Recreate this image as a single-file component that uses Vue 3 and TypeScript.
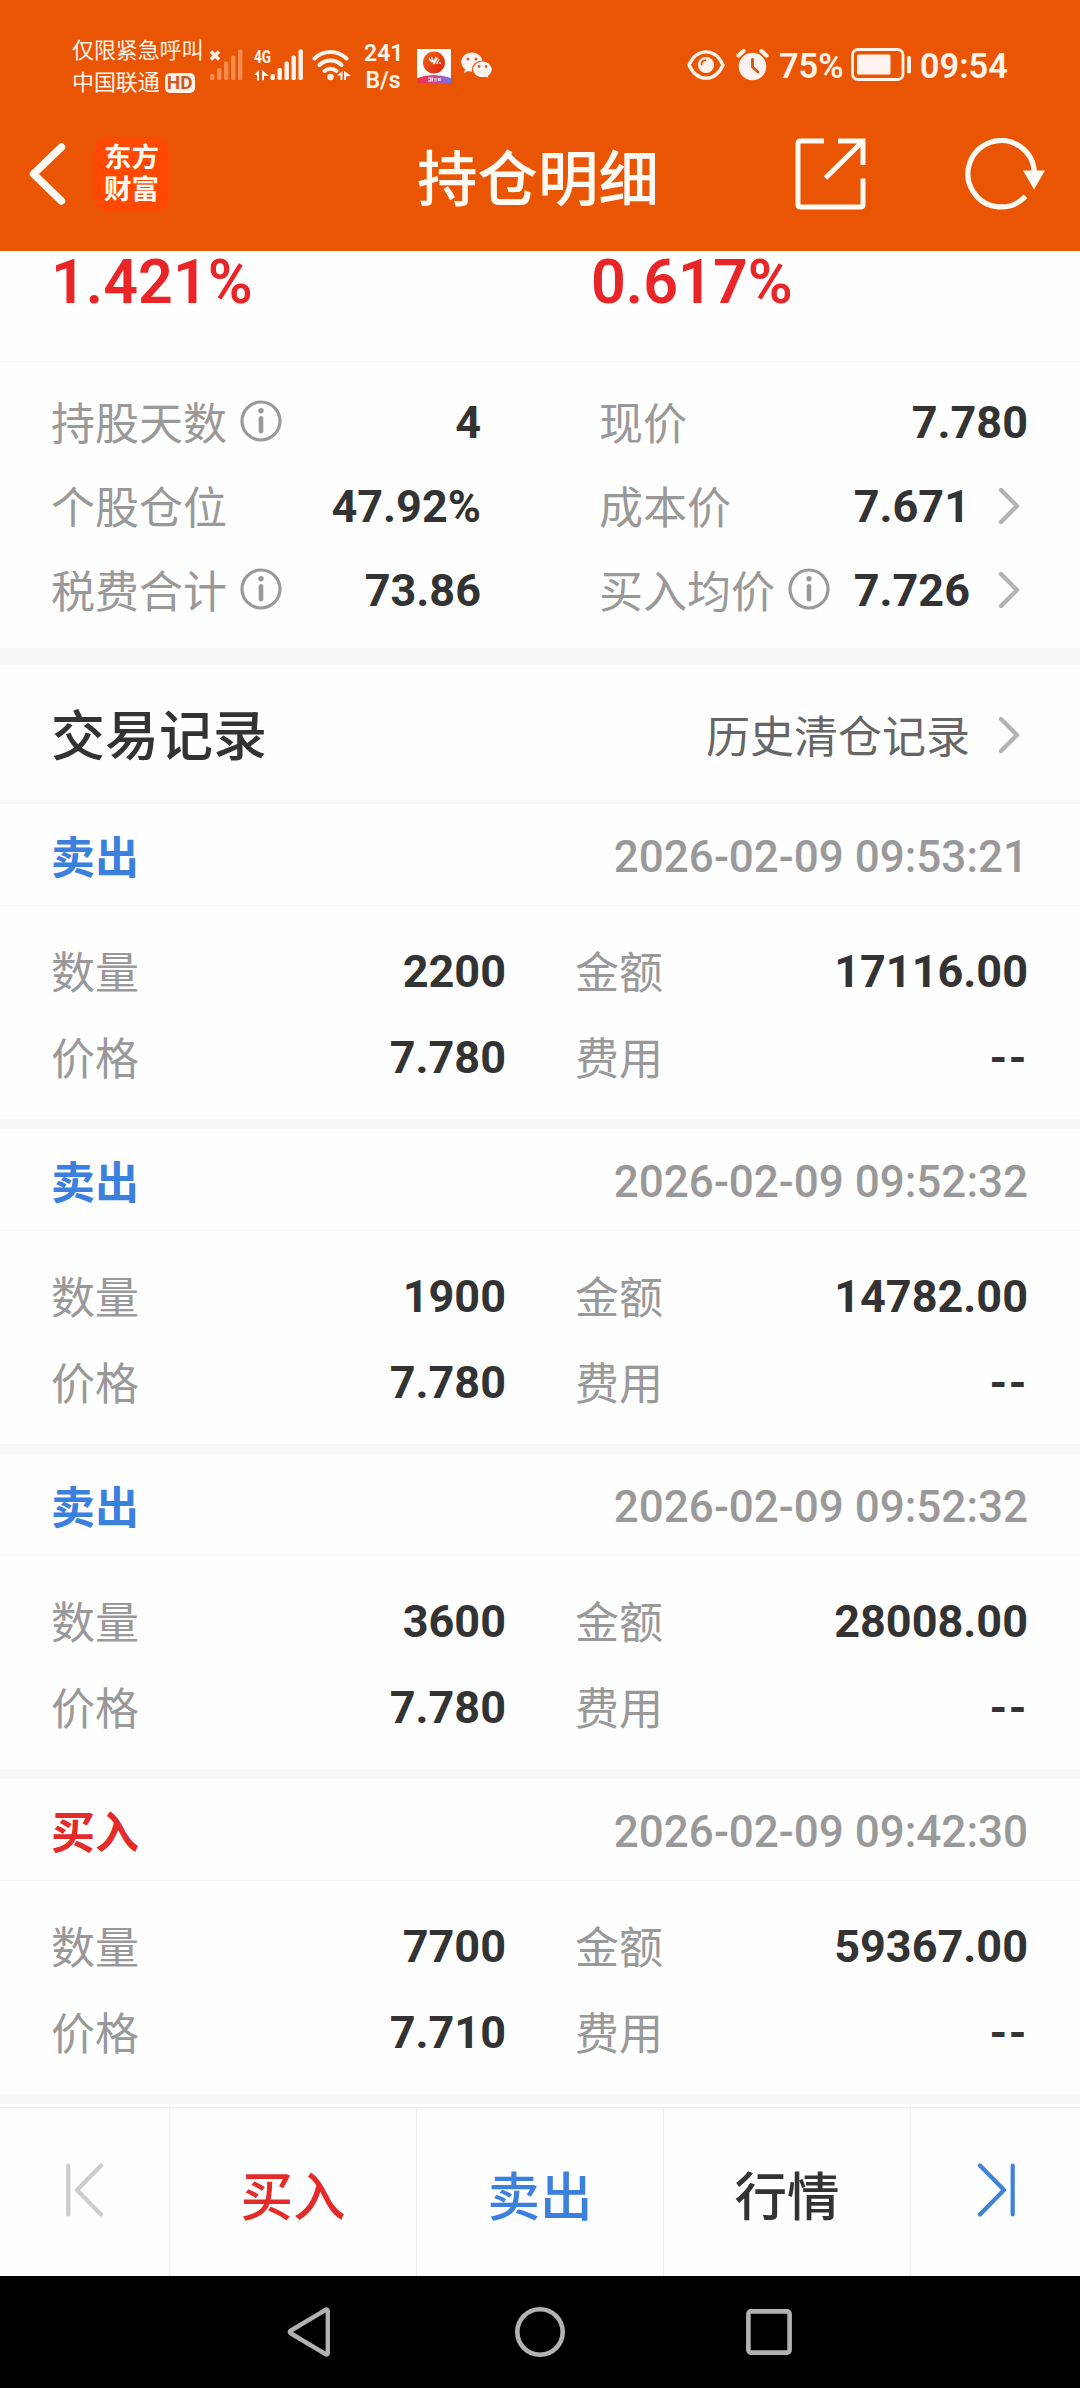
<script setup lang="ts">
interface TradeRecord {
  side: 'buy' | 'sell'
  time: string
  quantity: string
  amount: string
  price: string
  fee: string
}

interface Stat {
  label: string
  value: string
  info?: boolean
  link?: boolean
}

const stats: [Stat, Stat][] = [
  [
    { label: '持股天数', value: '4', info: true },
    { label: '现价', value: '7.780' },
  ],
  [
    { label: '个股仓位', value: '47.92%' },
    { label: '成本价', value: '7.671', link: true },
  ],
  [
    { label: '税费合计', value: '73.86', info: true },
    { label: '买入均价', value: '7.726', info: true, link: true },
  ],
]

const records: TradeRecord[] = [
  { side: 'sell', time: '2026-02-09 09:53:21', quantity: '2200', amount: '17116.00', price: '7.780', fee: '--' },
  { side: 'sell', time: '2026-02-09 09:52:32', quantity: '1900', amount: '14782.00', price: '7.780', fee: '--' },
  { side: 'sell', time: '2026-02-09 09:52:32', quantity: '3600', amount: '28008.00', price: '7.780', fee: '--' },
  { side: 'buy', time: '2026-02-09 09:42:30', quantity: '7700', amount: '59367.00', price: '7.710', fee: '--' },
]
</script>

<template>
  <div class="screen">
    <header class="top">
      <div class="status">
        <div class="carrier">
          <div class="carrier-line">仅限紧急呼叫</div>
          <div class="carrier-line">中国联通<span class="hd">HD</span></div>
        </div>
        <svg class="signal-off" width="34" height="32" viewBox="0 0 34 32">
          <path d="M2 2.500l8 8M10 2.500l-8 8" stroke="#fff3ea" stroke-width="3.400" />
          <g fill="#f78c4d">
            <rect x="1" y="25" width="4.400" height="6" rx="1.600" />
            <rect x="8" y="19" width="4.400" height="12" rx="1.600" />
            <rect x="15" y="12.500" width="4.400" height="18.500" rx="1.600" />
            <rect x="22" y="6.500" width="4.400" height="24.500" rx="1.600" />
            <rect x="29" y="0.500" width="4.400" height="30.500" rx="1.600" />
          </g>
        </svg>
        <div class="mobile">
          <div class="gen">
            <span class="gen-text">4G</span>
            <svg width="16" height="11" viewBox="0 0 16 11" fill="#fff3ea">
              <path d="M0 5L5 0v10.500H3V5zM8 0v10.500L10 10V6h5z" />
            </svg>
          </div>
          <svg width="34" height="32" viewBox="0 0 34 32" fill="#fff3ea">
            <rect x="0.500" y="25" width="4.400" height="6" rx="1.600" />
            <rect x="7.500" y="19" width="4.400" height="12" rx="1.600" />
            <rect x="14.500" y="12.500" width="4.400" height="18.500" rx="1.600" />
            <rect x="21.500" y="6.500" width="4.400" height="24.500" rx="1.600" />
            <rect x="28.500" y="0.500" width="4.400" height="30.500" rx="1.600" />
          </svg>
        </div>
        <svg class="wifi" width="40" height="32" viewBox="0 0 40 32">
          <g fill="none" stroke="#fff3ea" stroke-width="4" stroke-linecap="round">
            <path d="M2.500 9.500a23 23 0 0 1 32 0" />
            <path d="M7.500 16a16 16 0 0 1 22 0" />
            <path d="M12.500 22a9 9 0 0 1 12 0" />
          </g>
          <circle cx="18.500" cy="28" r="3.300" fill="#fff3ea" />
          <path d="M25 26.500L30.500 22v9h-2v-4.500zM32 22v9h2v-3.500l5-1z" fill="#fff3ea" />
        </svg>
        <div class="speed">
          <div>241</div>
          <div>B/s</div>
        </div>
        <svg class="app-badge" width="34" height="34" viewBox="0 0 34 34">
          <defs>
            <linearGradient id="ball" x1="0" y1="0" x2="1" y2="1">
              <stop offset="0" stop-color="#f06a10" />
              <stop offset="1" stop-color="#dc1f13" />
            </linearGradient>
            <linearGradient id="ribbon" x1="0" y1="0" x2="1" y2="0">
              <stop offset="0" stop-color="#f0353f" />
              <stop offset="0.500" stop-color="#d8408c" />
              <stop offset="1" stop-color="#6f78f2" />
            </linearGradient>
          </defs>
          <rect width="34" height="34" fill="#fff" />
          <circle cx="17" cy="13.500" r="11" fill="url(#ball)" />
          <path d="M12 9.500l3 3.500M14.500 8l2 6 2.500-6M17 15l3.500-6.500M19.500 15l2.500-5M22.500 13l1 2" fill="none" stroke="#fff" stroke-width="1.300" />
          <path d="M0 29q17-6 34 0v5H0z" fill="url(#ribbon)" />
          <path d="M11 29h3v3h-3M15.500 28.500v4M17 30h3M17.500 32h2M21.500 29v3M23 29v3" fill="none" stroke="#fff" stroke-width="1.100" />
        </svg>
        <svg class="wechat" width="32" height="28" viewBox="0 0 32 28">
          <path d="M11 0.500C5 0.500 0.300 4.700 0.300 10c0 3 1.500 5.500 3.700 7.200L3.200 21l4-2c2.500.7 4.500.8 7 .3C22 18 21.700 12 21.500 9.500 21 4.200 16.500 0.500 11 0.500z" fill="#fff3ef" />
          <path d="M21.500 9c-5.500 0-10 3.800-10 8.500s4.500 8.300 10 8.300c1.300 0 2.500-.2 3.600-.5l3.200 1.700-.7-3c2.300-1.600 3.700-3.900 3.700-6.500 0-4.700-4.400-8.500-9.800-8.500z" fill="#fff3ef" stroke="#ea5504" stroke-width="1.200" />
          <g fill="#c06a3c">
            <circle cx="7" cy="7" r="1.500" />
            <circle cx="15" cy="7" r="1.500" />
            <circle cx="18" cy="14.500" r="1.400" />
            <circle cx="25" cy="14.500" r="1.400" />
          </g>
        </svg>
        <div class="status-right">
          <svg width="38" height="30" viewBox="0 0 38 30">
            <path d="M2 15C10-2.500 28-2.500 36 15 28 32.500 10 32.500 2 15z" fill="none" stroke="#fff3ea" stroke-width="3.400" stroke-linejoin="round" />
            <circle cx="19" cy="15" r="8" fill="#fff3ea" />
            <path d="M14.500 14.500a4.500 4.500 0 0 1 4-4.300" fill="none" stroke="#ea5504" stroke-width="1.800" stroke-linecap="round" />
          </svg>
          <svg class="alarm" width="33" height="32" viewBox="0 0 33 32">
            <circle cx="16.500" cy="17.500" r="13.800" fill="#fff3ef" />
            <path d="M2.500 6.500l5-4.500M30.500 6.500l-5-4.500" stroke="#fff3ea" stroke-width="4.200" stroke-linecap="round" />
            <path d="M16.500 10.500v7.500l5.500 5" fill="none" stroke="#c9561c" stroke-width="2.800" stroke-linecap="round" stroke-linejoin="round" />
          </svg>
          <span class="status-num percent">75%</span>
          <svg class="battery" width="61" height="34" viewBox="0 0 61 34">
            <rect x="1.500" y="1.500" width="50.500" height="30" rx="5.500" fill="none" stroke="#fff3ea" stroke-width="2.800" />
            <rect x="6" y="6.500" width="33.500" height="20" rx="1.500" fill="#fff3ef" />
            <rect x="56" y="8" width="4" height="17.500" rx="1.800" fill="#fff3ea" />
          </svg>
          <span class="status-num">09:54</span>
        </div>
      </div>
      <div class="titlebar">
        <div class="title-side">
          <svg width="38" height="62" viewBox="0 0 38 62">
            <path d="M32.500 4L4.500 31l28 27" fill="none" stroke="#fffaf5" stroke-width="7.500" stroke-linecap="round" stroke-linejoin="round" />
          </svg>
          <div class="logo"><span>东方</span><span>财富</span></div>
        </div>
        <h1 class="title">持仓明细</h1>
        <div class="title-side right">
          <svg width="72" height="72" viewBox="0 0 72 72" fill="none" stroke="#fffaf3" stroke-width="5">
            <path d="M29 3H5.500Q3 3 3 5.500v61q0 2.500 2.500 2.500h60q2.500 0 2.500-2.500V40.500" />
            <path d="M43 3h25v24M67.500 3.500L30.500 40" />
          </svg>
          <svg class="refresh" width="82" height="72" viewBox="0 0 82 72">
            <path d="M69.300 34A33.200 33.200 0 1 0 60.500 58.300" fill="none" stroke="#fffaf3" stroke-width="5.200" />
            <path d="M58 32.500h22L69 51.500z" fill="#fffaf3" />
          </svg>
        </div>
      </div>
    </header>

    <section class="rates">
      <span class="rate">1.421%</span>
      <span class="rate">0.617%</span>
    </section>

    <section class="stats">
      <div v-for="(row, i) in stats" :key="i" class="stat-row">
        <div v-for="(cell, j) in row" :key="j" class="stat">
          <span class="label">{{ cell.label }}</span>
          <svg v-if="cell.info" class="info" width="42" height="42" viewBox="0 0 42 42">
            <circle cx="21" cy="21" r="19" fill="none" stroke="#999" stroke-width="3.200" />
            <circle cx="21" cy="10.800" r="2.700" fill="#999" />
            <path d="M21 18.300v13" stroke="#999" stroke-width="4.600" stroke-linecap="round" />
          </svg>
          <span class="value">{{ cell.value }}</span>
          <svg v-if="cell.link" class="chevron" width="22" height="38" viewBox="0 0 22 38">
            <path d="M3 3l16 16L3 35" fill="none" stroke="#b3b3b3" stroke-width="4.400" stroke-linecap="round" stroke-linejoin="round" />
          </svg>
        </div>
      </div>
    </section>

    <section class="section-head">
      <h2 class="section-title">交易记录</h2>
      <span class="history">历史清仓记录</span>
      <svg class="chevron" width="22" height="38" viewBox="0 0 22 38">
        <path d="M3 3l16 16L3 35" fill="none" stroke="#b3b3b3" stroke-width="4.400" stroke-linecap="round" stroke-linejoin="round" />
      </svg>
    </section>

    <article v-for="(r, i) in records" :key="i" class="record">
      <div class="record-head">
        <span class="side" :class="r.side">{{ r.side === 'buy' ? '买入' : '卖出' }}</span>
        <time class="time">{{ r.time }}</time>
      </div>
      <div class="record-body">
        <div class="record-row">
          <div class="pair"><span class="label">数量</span><span class="value">{{ r.quantity }}</span></div>
          <div class="pair"><span class="label">金额</span><span class="value">{{ r.amount }}</span></div>
        </div>
        <div class="record-row">
          <div class="pair"><span class="label">价格</span><span class="value">{{ r.price }}</span></div>
          <div class="pair"><span class="label">费用</span><span class="value fee">{{ r.fee }}</span></div>
        </div>
      </div>
    </article>

    <nav class="actions">
      <div class="action edge">
        <svg width="38" height="54" viewBox="0 0 38 54" fill="none" stroke="#ccc" stroke-width="4.200" stroke-linecap="round" stroke-linejoin="round">
          <path d="M2.300 2.500v49M35 2.500L11 27l24 24.500" />
        </svg>
      </div>
      <div class="action buy"><span>买入</span></div>
      <div class="action sell"><span>卖出</span></div>
      <div class="action"><span>行情</span></div>
      <div class="action edge">
        <svg width="38" height="54" viewBox="0 0 38 54" fill="none" stroke="#3f82d8" stroke-width="4.200" stroke-linecap="round" stroke-linejoin="round">
          <path d="M35.700 2.500v49M3 2.500L27 27 3 51.500" />
        </svg>
      </div>
    </nav>

    <footer class="sysnav">
      <svg width="44" height="50" viewBox="0 0 44 50">
        <path d="M40.800 4.500v41q0 3-2.600 1.400L4 26.500q-2.500-1.500 0-3L38.200 3.100q2.600-1.600 2.600 1.400z" fill="none" stroke="#b2b2b2" stroke-width="4.400" stroke-linejoin="round" />
      </svg>
      <svg class="home" width="50" height="50" viewBox="0 0 50 50">
        <circle cx="25" cy="25" r="22.700" fill="none" stroke="#b2b2b2" stroke-width="4.600" />
      </svg>
      <svg width="46" height="46" viewBox="0 0 46 46">
        <rect x="2.400" y="2.400" width="41.200" height="41.200" rx="2.500" fill="none" stroke="#b2b2b2" stroke-width="4.600" />
      </svg>
    </footer>
  </div>
</template>

<style>
body {
  margin: 0;
  background: #fefefe;
}
</style>

<style scoped>
.screen {
  width: 1080px;
  height: 2388px;
  display: flex;
  flex-direction: column;
  overflow: hidden;
  background: #fefefe;
  color: #333;
  font-family: Roboto, "Noto Sans CJK SC", sans-serif;
}
svg {
  display: block;
  flex: none;
}
.top {
  height: 251px;
  flex: none;
  background: #ea5504;
  color: #fffaf3;
}
.status {
  height: 110px;
  padding: 20px 72px 0 72px;
  box-sizing: border-box;
  display: flex;
  align-items: center;
  color: #fff3ea;
}
.carrier {
  width: 137px;
  font-size: 22px;
  line-height: 32px;
  white-space: nowrap;
  padding-top: 4px;
}
.carrier-line {
  display: flex;
  align-items: center;
  letter-spacing: -0.1px;
}
.hd {
  width: 30px;
  height: 20px;
  margin: 0 0 0 5px;
  border-radius: 5px;
  background: #fff3ea;
  color: #d4571a;
  font-size: 19px;
  font-weight: 700;
  line-height: 20px;
  text-align: center;
}
.signal-off {
  margin-right: 11px;
}
.mobile {
  display: flex;
  align-items: flex-end;
}
.gen {
  width: 16px;
  height: 32px;
  display: flex;
  flex-direction: column;
  justify-content: space-between;
}
.gen-text {
  font-size: 19px;
  font-weight: 700;
  line-height: 16px;
  white-space: nowrap;
  transform: scaleX(0.72);
  transform-origin: left;
}
.wifi {
  margin-left: 8px;
}
.speed {
  width: 38px;
  margin-left: 12px;
  padding-top: 4px;
  text-align: center;
  font-size: 23px;
  line-height: 27px;
  font-weight: 600;
}
.app-badge {
  margin-left: 15px;
  margin-top: 2px;
}
.wechat {
  margin-left: 10px;
  margin-top: 2px;
}
.status-right {
  flex: 1;
  display: flex;
  align-items: center;
  justify-content: flex-end;
}
.alarm {
  margin: 0 10px 0 11px;
}
.status-num {
  font-size: 34.500px;
  line-height: 40px;
  font-weight: 600;
  padding-top: 2px;
}
.percent {
  margin-right: 7px;
}
.battery {
  margin-right: 8px;
}
.titlebar {
  height: 141px;
  box-sizing: border-box;
  display: flex;
  align-items: center;
  padding: 0 33px 13px 29px;
}
.title-side {
  width: 300px;
  display: flex;
  align-items: center;
}
.title-side.right {
  justify-content: flex-end;
}
.logo {
  width: 75px;
  height: 75px;
  margin-left: 27px;
  border-radius: 15px;
  background: #ff4800;
  display: flex;
  flex-direction: column;
  align-items: center;
  justify-content: center;
  font-size: 27.500px;
  line-height: 32px;
  font-weight: 700;
}
.title {
  flex: 1;
  margin: 0;
  padding-top: 14px;
  text-align: center;
  font-size: 60.500px;
  line-height: 80px;
  font-weight: 500;
}
.refresh {
  margin-left: 98px;
}
.rates {
  height: 110px;
  flex: none;
  display: flex;
  padding-left: 51px;
  border-bottom: 1px solid #f4f4f5;
}
.rate {
  flex: none;
  width: 540px;
  color: #ea2528;
  font-size: 61px;
  line-height: 62px;
  font-weight: 600;
}
.rate + .rate {
  width: 440px;
}
.stats {
  height: 286px;
  box-sizing: border-box;
  flex: none;
  padding: 19px 52px 0 51px;
}
.stat-row {
  height: 84px;
  display: flex;
  gap: 118px;
}
.stat {
  width: 430px;
  display: flex;
  align-items: center;
}
.stat + .stat {
  width: 429px;
}
.label {
  padding-top: 3px;
  color: #999;
  font-size: 44px;
  line-height: 60px;
}
.info {
  margin: -4px 0 0 13px;
}
.value {
  margin-left: auto;
  font-size: 45px;
  line-height: 60px;
  font-weight: 700;
}
.fee {
  letter-spacing: 1.500px;
}
.stat .chevron {
  margin: -3px 8px 0 28px;
}
.section-head {
  height: 156px;
  box-sizing: border-box;
  flex: none;
  display: flex;
  align-items: center;
  padding: 0 60px 0 51px;
  border-top: 17px solid #f7f8fa;
  border-bottom: 4px solid #f8f8f9;
}
.section-title {
  flex: 1;
  margin: 0;
  padding-top: 10px;
  font-size: 54px;
  line-height: 70px;
  font-weight: 500;
}
.history {
  padding-top: 11px;
  color: #666;
  font-size: 44px;
  line-height: 60px;
}
.section-head .chevron {
  margin: 4px 0 0 28px;
}
.record {
  height: 325px;
  box-sizing: border-box;
  flex: none;
  border-bottom: 10px solid #f7f8fa;
}
.record-head {
  height: 102px;
  box-sizing: border-box;
  display: flex;
  align-items: center;
  justify-content: space-between;
  padding: 5px 52px 0 51px;
  border-bottom: 1px solid #f4f4f5;
  font-size: 44px;
  line-height: 60px;
}
.side {
  padding-top: 3px;
  font-weight: 700;
}
.sell {
  color: #3a80dc;
}
.buy {
  color: #e52a2a;
}
.time {
  color: #999;
  font-weight: 500;
}
.record-body {
  padding: 23px 52px 0 51px;
}
.record-row {
  height: 86px;
  display: flex;
  gap: 69px;
}
.pair {
  width: 455px;
  display: flex;
  align-items: center;
}
.pair + .pair {
  width: 453px;
}
.actions {
  height: 169px;
  box-sizing: border-box;
  flex: none;
  margin-top: 3px;
  display: flex;
  border-top: 1px solid #ebebeb;
}
.action {
  width: 247px;
  box-sizing: border-box;
  display: flex;
  align-items: center;
  justify-content: center;
  border-left: 1px solid #ebebeb;
  font-size: 52.500px;
  line-height: 70px;
  font-weight: 500;
}
.action span {
  padding-top: 11px;
}
.action.edge {
  width: 169px;
  border-left: none;
  padding-bottom: 4px;
}
.action.edge:last-child {
  width: 170px;
  border-left: 1px solid #ebebeb;
}
.sysnav {
  flex: 1;
  display: flex;
  align-items: center;
  justify-content: center;
  padding-right: 1px;
  background: #000;
}
.home {
  margin: 0 181px 0 184px;
}
</style>
